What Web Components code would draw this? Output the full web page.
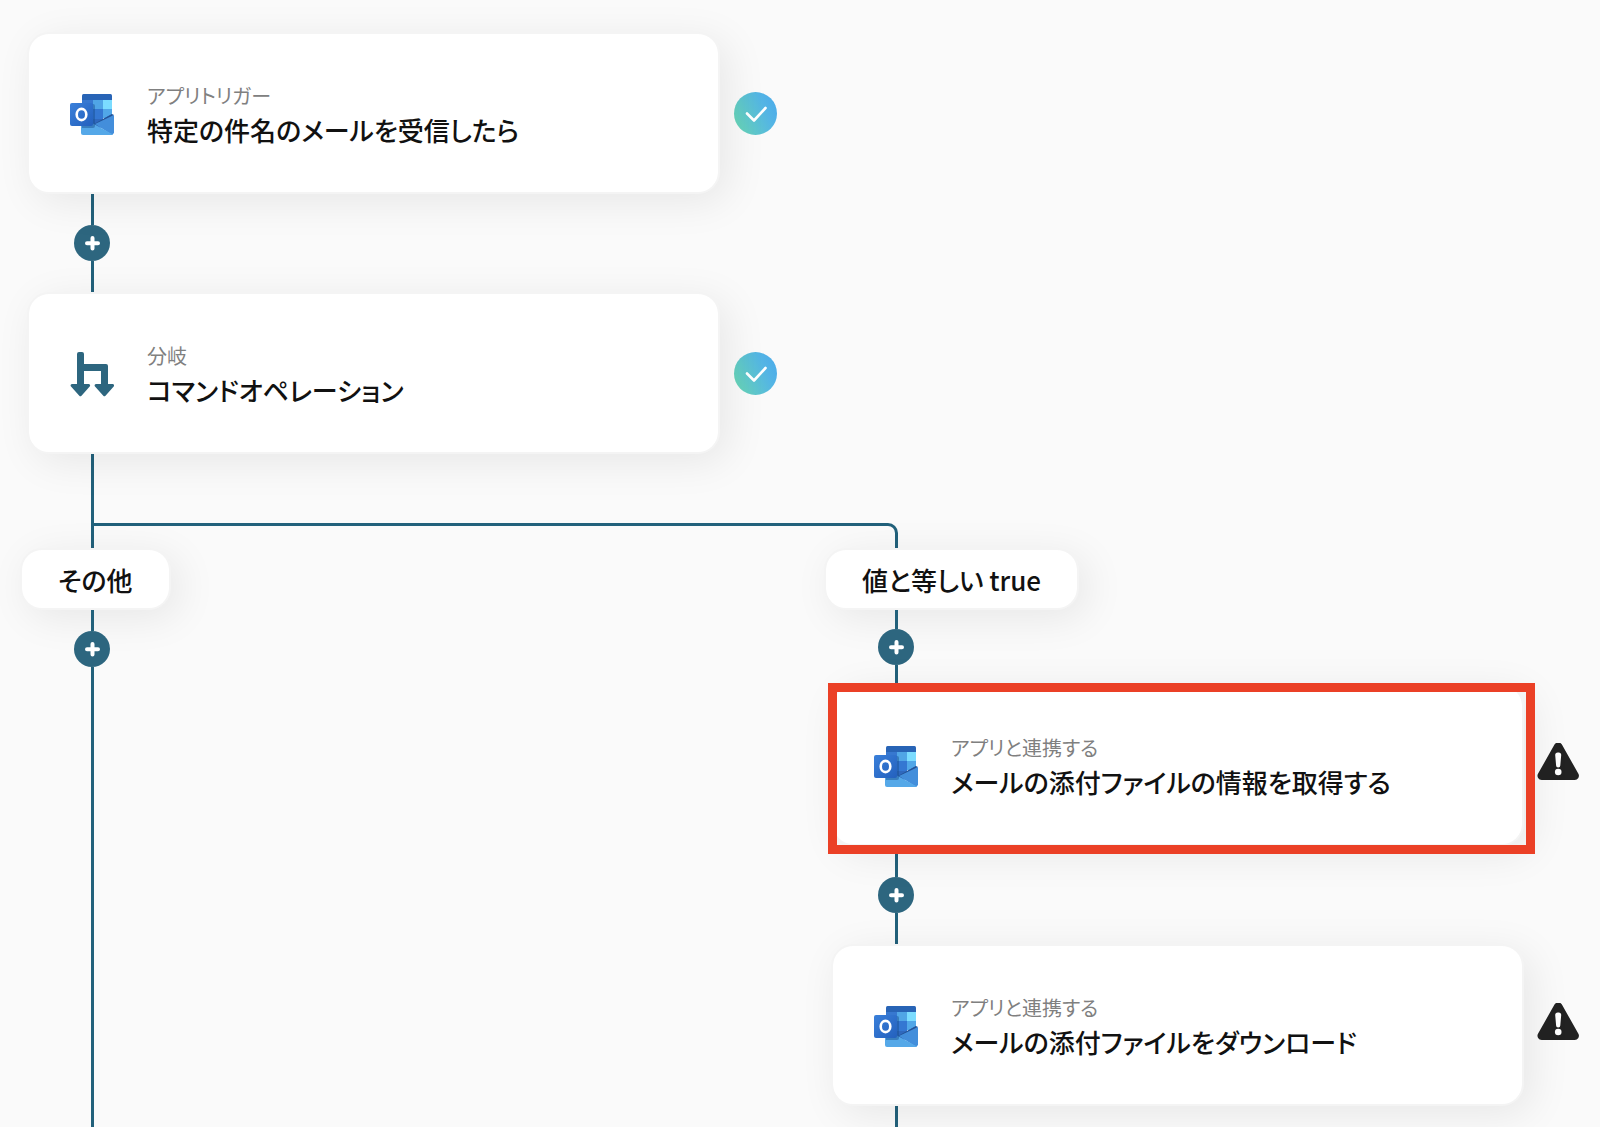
<!DOCTYPE html>
<html lang="ja">
<head>
<meta charset="utf-8">
<meta name="viewport" content="width=device-width, initial-scale=1">
<title>ワークフロー</title>
<style>
  body {
    margin: 0;
    background: #fafafa;
    color: #111;
    font-family: "Noto Sans CJK JP", "Noto Sans", sans-serif;
    font-feature-settings: "palt";
    --line-color: #22617b;
    --accent: #2d667f;
    --edge: #f4f4f4;
    --lane-gap: 47px;
    --line-inset: 71px;
    --shadow: 8px 8px 40px rgba(0, 0, 0, .08);
  }
</style>
</head>
<body>
<flow-board>
  <flow-lane>
    <flow-step icon="outlook" status="done">
      <span slot="kind">アプリトリガー</span>
      特定の件名のメールを受信したら
    </flow-step>
    <flow-link addable></flow-link>
    <flow-step icon="branch" status="done">
      <span slot="kind">分岐</span>
      コマンドオペレーション
    </flow-step>
  </flow-lane>
  <flow-fork></flow-fork>
  <flow-lane>
    <flow-condition>その他</flow-condition>
    <flow-link addable tail></flow-link>
  </flow-lane>
  <flow-lane>
    <flow-condition>値と等しい true</flow-condition>
    <flow-link addable short></flow-link>
    <flow-step icon="outlook" status="warning" highlighted>
      <span slot="kind">アプリと連携する</span>
      メールの添付ファイルの情報を取得する
    </flow-step>
    <flow-link addable></flow-link>
    <flow-step icon="outlook" status="warning">
      <span slot="kind">アプリと連携する</span>
      メールの添付ファイルをダウンロード
    </flow-step>
    <flow-link tail></flow-link>
  </flow-lane>
</flow-board>

<script>
const icons = {
  outlook: `
    <svg viewBox="0 0 44 41" width="44" height="41" aria-hidden="true">
      <defs>
        <linearGradient id="tile" x1="0" y1="0" x2="1" y2="1">
          <stop offset="0" stop-color="#3a80da"/>
          <stop offset="1" stop-color="#2360bd"/>
        </linearGradient>
      </defs>
      <path d="M13.5 0h27A1.5 1.5 0 0 1 42 1.5V7H12V1.5A1.5 1.5 0 0 1 13.5 0z" fill="#2864b6"/>
      <path d="M12 6h11v9H12z" fill="#3778d0"/>
      <path d="M23 6h10v9H23z" fill="#50a5e6"/>
      <path d="M33 6h9v9h-9z" fill="#7bdcff"/>
      <path d="M12 15h11v10H12z" fill="#2663b5"/>
      <path d="M23 15h10v10H23z" fill="#3477d2"/>
      <path d="M33 15h9v9h-9z" fill="#51a7e8"/>
      <path d="M12 25h21l9-5v6L30 34H12z" fill="#2f68bd"/>
      <path d="M42 20l2 1-16 11-4-2z" fill="#245397"/>
      <path d="M44 21v18l-2 2-17-11z" fill="#438edb"/>
      <path d="M11 23l32 17.500-1 .5H13a2 2 0 0 1-2-2z" fill="#55a8e8"/>
      <path d="M12 10h11a2 2 0 0 1 2 2v20a2 2 0 0 1-2 2H12z" fill="#174b8c" opacity=".45"/>
      <rect y="9" width="23" height="23" rx="2" fill="url(#tile)"/>
      <ellipse cx="11.5" cy="20.5" rx="4.800" ry="5.600" fill="none" stroke="#fff" stroke-width="2.600"/>
    </svg>`,
  branch: `
    <svg viewBox="0 0 44 45" width="44" height="45" aria-hidden="true">
      <path fill="#2d667f" d="M7 2a2 2 0 0 1 2-2h3a2 2 0 0 1 2 2v10h22a2 2 0 0 1 2 2v18h4.500a1.500 1.500 0 0 1 1.200 2.500L35.500 43.700a1.500 1.500 0 0 1-2.200 0L25 34.500A1.500 1.500 0 0 1 26.200 32H31V19H14v13h4.500a1.500 1.500 0 0 1 1.200 2.500L11.500 43.700a1.500 1.500 0 0 1-2.200 0L1 34.500A1.500 1.500 0 0 1 2.200 32H7z"/>
    </svg>`,
  done: `
    <svg viewBox="0 0 44 44" width="44" height="44" role="img" aria-label="完了">
      <defs>
        <linearGradient id="fill" x1="0" y1=".8" x2="1" y2=".35">
          <stop offset="0" stop-color="#68d6b6"/>
          <stop offset=".75" stop-color="#54b5e4"/>
          <stop offset="1" stop-color="#4dade9"/>
        </linearGradient>
      </defs>
      <circle cx="22.500" cy="22.500" r="21.500" fill="url(#fill)"/>
      <path d="M14 22.500l7 7L32.500 17" fill="none" stroke="#fff" stroke-width="2.600" stroke-linecap="round" stroke-linejoin="round"/>
    </svg>`,
  warning: `
    <svg viewBox="0 1 44 44" width="44" height="44" role="img" aria-label="警告">
      <path fill="#222" d="M17.500 2.500a4.300 4.300 0 0 1 7.400 0l16.500 29.300a4.200 4.200 0 0 1-3.700 6.200H4.700A4.200 4.200 0 0 1 1 31.800z"/>
      <path fill="#fff" d="M18.200 13a2.600 2.600 0 0 1 2.600-2.600h.8a2.600 2.600 0 0 1 2.600 2.600l-.9 10.500a2.100 2.100 0 0 1-4.200 0z"/>
      <circle cx="21.200" cy="30" r="3.300" fill="#fff"/>
    </svg>`
};

const makeTemplate = html => {
  const template = document.createElement('template');
  template.innerHTML = html;
  return template;
};

class FlowElement extends HTMLElement {
  constructor() {
    super();
    this.attachShadow({ mode: 'open' });
    this.shadowRoot.appendChild(
      this.constructor.template.content.cloneNode(true));
  }
}


class FlowBoard extends FlowElement {}

FlowBoard.template = makeTemplate(`
<style>
  :host {
    box-sizing: border-box;
    display: grid;
    grid-template-columns: 1fr 1fr;
    grid-template-rows: auto auto 1fr;
    column-gap: var(--lane-gap);
    min-height: 100vh;
    padding: 32px 19px 0 20px;
  }
</style>
<slot></slot>`);


class FlowLane extends FlowElement {}

FlowLane.template = makeTemplate(`
<style>
  :host {
    display: flex;
    flex-direction: column;
    min-width: 0;
  }
</style>
<slot></slot>`);


class FlowStep extends FlowElement {
  connectedCallback() {
    this.shadowRoot.querySelector('.icon').innerHTML = icons[this.getAttribute('icon')];
    this.shadowRoot.querySelector('.status').innerHTML = icons[this.getAttribute('status')];
  }
}

FlowStep.template = makeTemplate(`
<style>
  :host {
    display: flex;
    align-items: center;
    gap: 13px;
    padding-left: 7px;
  }

  .card {
    position: relative;
    box-sizing: border-box;
    display: flex;
    flex: 1;
    align-items: center;
    gap: 33px;
    min-width: 0;
    padding: 46px 41px 44px;
    background: #fff;
    background-clip: padding-box;
    border: 2px solid var(--edge);
    border-radius: 22px;
    box-shadow: var(--shadow);
  }

  /* the frame is larger than the card and lies over its neighbours */
  :host([highlighted]) .card::after {
    content: "";
    position: absolute;
    inset: -3px -13px -10px -5px;
    border: 9px solid #eb4026;
  }

  .icon, .status {
    display: grid;
    flex: none;
    place-items: center;
    width: 44px;
  }

  .kind {
    margin: 0;
    color: #808080;
    font-size: 20px;
    font-weight: 400;
    line-height: 32px;
  }

  .title {
    margin: 0;
    font-size: 26px;
    font-weight: 500;
    line-height: 36px;
  }
</style>
<div class="card">
  <div class="icon"></div>
  <div>
    <p class="kind"><slot name="kind"></slot></p>
    <h2 class="title"><slot></slot></h2>
  </div>
</div>
<div class="status"></div>`);


class FlowCondition extends FlowElement {}

FlowCondition.template = makeTemplate(`
<style>
  :host {
    align-self: flex-start;
    padding: 12px 36px 10px;
    background: #fff;
    background-clip: padding-box;
    border: 2px solid var(--edge);
    border-radius: 22px;
    box-shadow: var(--shadow);
    font-size: 26px;
    font-weight: 500;
    line-height: 36px;
  }
</style>
<slot></slot>`);


class FlowLink extends FlowElement {
  connectedCallback() {
    if (!this.hasAttribute('addable')) {
      this.shadowRoot.querySelector('button').remove();
    }
  }
}

FlowLink.template = makeTemplate(`
<style>
  :host {
    display: flex;
    flex-direction: column;
    align-self: flex-start;
    width: 36px;
    height: 98px;
    margin-left: calc(var(--line-inset) - 17px);
  }

  :host([short]) {
    height: 74px;
  }

  :host([tail]) {
    flex: 1;
    height: auto;
  }

  .line {
    flex: 1;
    width: 3px;
    margin-left: 17px;
    background: var(--line-color);
  }

  :host([tail][addable]) .line:first-of-type {
    flex: 0 0 21px;
  }

  button {
    display: grid;
    flex: none;
    place-items: center;
    width: 36px;
    height: 36px;
    padding: 0;
    background: var(--accent);
    border: 0;
    border-radius: 50%;
    cursor: pointer;
  }
</style>
<div class="line"></div>
<button type="button" aria-label="追加">
  <svg viewBox="0 0 16 16" width="16" height="16" aria-hidden="true">
    <path d="M8.500 3v10.500M3 8.200h11" stroke="#fff" stroke-width="4" stroke-linecap="round"/>
  </svg>
</button>
<div class="line"></div>`);


class FlowFork extends FlowElement {}

FlowFork.template = makeTemplate(`
<style>
  :host {
    display: block;
    grid-column: 1 / -1;
  }

  .trunk {
    height: 69px;
    margin-left: var(--line-inset);
    border-left: 3px solid var(--line-color);
  }

  .elbow {
    width: calc((100% + var(--lane-gap)) / 2 - 3px);
    height: 22px;
    margin-left: var(--line-inset);
    border: 3px solid var(--line-color);
    border-bottom: 0;
    border-top-right-radius: 10px;
  }
</style>
<div class="trunk"></div>
<div class="elbow"></div>`);


customElements.define('flow-board', FlowBoard);
customElements.define('flow-lane', FlowLane);
customElements.define('flow-step', FlowStep);
customElements.define('flow-condition', FlowCondition);
customElements.define('flow-link', FlowLink);
customElements.define('flow-fork', FlowFork);
</script>
</body>
</html>
